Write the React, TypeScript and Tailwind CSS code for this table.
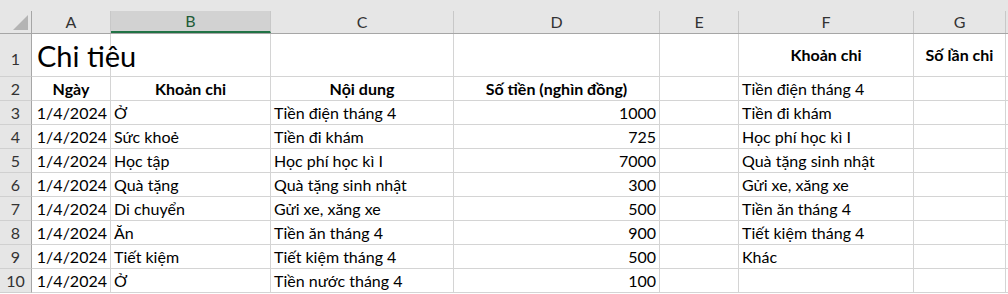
const cols = ["A", "B", "C", "D", "E", "F", "G"];
const widths = ["w-[79px]", "w-[160px]", "w-[183px]", "w-[206px]", "w-[79px]", "w-[175px]", "w-[92px]"];

type Cell = { text?: string; align?: "left" | "right" | "center"; bold?: boolean };

const rows: { h: string; cells: Cell[] }[] = [
  {
    h: "h-[43px]",
    cells: [{}, {}, {}, {}, {}, { text: "Khoản chi", align: "center", bold: true }, { text: "Số lần chi", align: "center", bold: true }],
  },
  {
    h: "h-[24px]",
    cells: [
      { text: "Ngày", align: "center", bold: true },
      { text: "Khoản chi", align: "center", bold: true },
      { text: "Nội dung", align: "center", bold: true },
      { text: "Số tiền (nghìn đồng)", align: "center", bold: true },
      {},
      { text: "Tiền điện tháng 4" },
      {},
    ],
  },
];

const data = [
  ["Ở", "Tiền điện tháng 4", "1000", "Tiền đi khám"],
  ["Sức khoẻ", "Tiền đi khám", "725", "Học phí học kì I"],
  ["Học tập", "Học phí học kì I", "7000", "Quà tặng sinh nhật"],
  ["Quà tặng", "Quà tặng sinh nhật", "300", "Gửi xe, xăng xe"],
  ["Di chuyển", "Gửi xe, xăng xe", "500", "Tiền ăn tháng 4"],
  ["Ăn", "Tiền ăn tháng 4", "900", "Tiết kiệm tháng 4"],
  ["Tiết kiệm", "Tiết kiệm tháng 4", "500", "Khác"],
  ["Ở", "Tiền nước tháng 4", "100", ""],
];

data.forEach(([b, c, d, f]) =>
  rows.push({
    h: "h-[24px]",
    cells: [{ text: "1/4/2024", align: "right" }, { text: b }, { text: c }, { text: d, align: "right" }, {}, { text: f }, {}],
  })
);

const alignCls = { left: "justify-start", right: "justify-end", center: "justify-center" };

export default function App() {
  return (
    <div className="w-[1008px] h-[294px] overflow-hidden bg-white text-black text-[16px] leading-none" style={{ fontFamily: "Lato, 'Noto Sans', sans-serif" }}>
      <div className="h-[11px] bg-[#e6e6e6]" />
      {/* column headers */}
      <div className="flex h-[23px] bg-[#e6e6e6] border-b border-[#a6a6a6]">
        <div className="relative w-[32px] shrink-0 border-r border-[#a6a6a6]">
          <svg className="absolute left-[13px] top-[4px]" width="15" height="15" viewBox="0 0 15 15">
            <polygon points="15,0 15,15 0,15" fill="#b4b4b4" />
          </svg>
        </div>
        {cols.map((c, i) => (
          <div
            key={c}
            className={`${widths[i]} shrink-0 flex items-center justify-center border-r border-[#c8c8c8] text-[16px] ${
              c === "B" ? "bg-[#d2d2d2] text-[#1e5c38] border-b-2 border-b-[#217346]" : "text-[#333]"
            }`}
          >
            {c}
          </div>
        ))}
        <div className="flex-1" />
      </div>
      {rows.map((r, ri) => (
        <div key={ri} className={`flex ${r.h}`}>
          <div
            className={`w-[32px] shrink-0 bg-[#e6e6e6] border-r border-[#a6a6a6] border-b border-b-[#d0d0d0] flex items-end justify-center text-[#333] ${
              ri === 0 ? "pb-[9px]" : "pb-[3px]"
            }`}
          >
            {ri + 1}
          </div>
          {r.cells.map((cell, ci) => (
            <div
              key={ci}
              className={`${widths[ci]} shrink-0 border-r border-b border-[#d4d4d4] flex px-[3px] whitespace-nowrap ${
                ri === 0 ? "items-center" : "items-end pb-[3px]"
              } ${alignCls[cell.align ?? "left"]} ${cell.bold ? "font-bold" : ""}`}
            >
              {ri === 0 && ci === 0 ? <span className="text-[29px] pl-[2px]">Chi tiêu</span> : cell.text}
            </div>
          ))}
          <div className="flex-1 border-b border-[#d4d4d4]" />
        </div>
      ))}
    </div>
  );
}
